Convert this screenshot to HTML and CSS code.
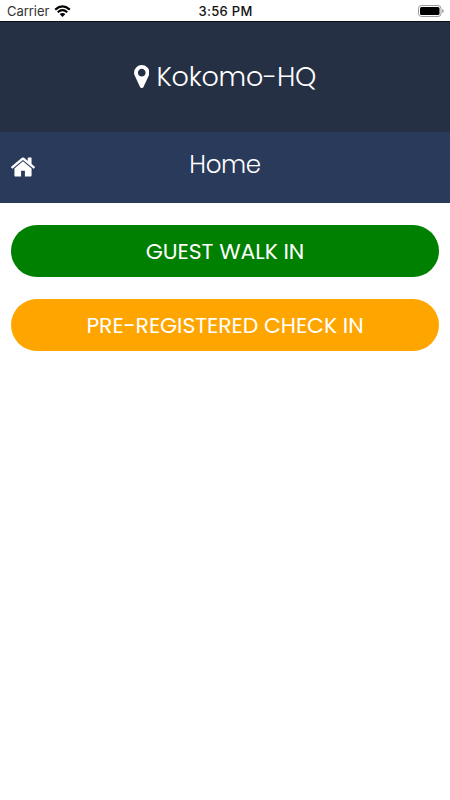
FILE: index.html
```html
<!DOCTYPE html>
<html lang="en">
<head>
    <meta charset="UTF-8">
    <meta name="viewport" content="width=device-width, initial-scale=1">
    <title>Kokomo-HQ</title>
    <link rel="stylesheet" href="styles.css">
</head>
<body>
    <div class="status-bar">
        <div class="carrier">
            <span class="carrier-name">Carrier</span>
            <svg class="wifi" viewBox="0 0 17 12">
                <path d="M1.2 4.6Q8.5-1.7 15.8 4.6M3.7 7.2Q8.5 3.1 13.3 7.2" fill="none" stroke="#000" stroke-width="2.1"/>
                <path d="M5.6 9.1Q8.5 6.9 11.4 9.1L8.5 12z"/>
            </svg>
        </div>
        <span class="time">3:56 PM</span>
        <div class="power">
            <svg class="battery" viewBox="0 0 26 12">
                <rect x=".5" y=".5" width="22.5" height="11" rx="3" fill="none" stroke="#999"/>
                <rect x="2" y="2" width="19.5" height="8" rx="1.5"/>
                <path d="M24.3 4v4q1.4-.6 1.4-2t-1.4-2z" fill="#888"/>
            </svg>
        </div>
    </div>
    <header class="location">
        <svg class="marker" viewBox="384 128 1024 1536">
            <path d="M1152 640q0-106-75-181t-181-75-181 75-75 181 75 181 181 75 181-75 75-181zm256 0q0 109-33 179l-364 774q-16 33-47.5 52t-67.5 19-67.5-19-46.5-52l-365-774q-33-70-33-179 0-212 150-362t362-150 362 150 150 362z"/>
        </svg>
        <span class="location-name">Kokomo-HQ</span>
    </header>
    <nav class="title-bar">
        <a class="home-link" href="#">
            <svg class="home-icon" viewBox="89 250 1614 1286">
                <path d="M1472 992v480q0 26-19 45t-45 19h-384v-384h-256v384h-384q-26 0-45-19t-19-45v-480q0-1 .5-3t.5-3l575-474 575 474q1 2 1 6zm223-69l-62 74q-8 9-21 11h-3q-13 0-21-7l-692-577-692 577q-12 8-24 7-13-2-21-11l-62-74q-8-10-7-23.5t11-21.5l719-599q32-26 76-26t76 26l244 204v-195q0-14 9-23t23-9h192q14 0 23 9t9 23v408l219 182q10 8 11 21.5t-7 23.5z"/>
            </svg>
        </a>
        <h1 class="page-title">Home</h1>
    </nav>
    <main class="actions">
        <button class="btn walk-in">GUEST WALK IN</button>
        <button class="btn check-in">PRE-REGISTERED CHECK IN</button>
    </main>
</body>
</html>
```
FILE: styles.css
```css
* {
    box-sizing: border-box;
}
body {
    margin: 0;
    background: #fff;
    font-family: Poppins, Inter, sans-serif;
}
svg {
    display: block;
}
.status-bar {
    display: grid;
    grid-template-columns: 1fr auto 1fr;
    align-items: center;
    height: 22px;
    padding: 0 6px 0 7px;
    border-bottom: 1px solid #0b0d12;
    font-family: Inter, sans-serif;
    font-size: 13px;
    line-height: 21px;
    color: #111;
}
.carrier {
    display: flex;
    align-items: center;
    gap: 5px;
}
.carrier-name {
    padding-top: 1px;
    color: #333;
    letter-spacing: -0.05px;
}
.wifi {
    width: 17px;
    height: 12px;
}
.time {
    padding-top: 1px;
    font-weight: 500;
    letter-spacing: 0.3px;
}
.power {
    display: flex;
    justify-content: flex-end;
}
.battery {
    width: 26px;
    height: 12px;
}
.location {
    display: flex;
    align-items: center;
    justify-content: center;
    gap: 7px;
    height: 110px;
    background: #253044;
    color: #fff;
}
.marker {
    width: 15.5px;
    height: 23px;
    margin-bottom: 1px;
    fill: #fff;
}
.location-name {
    font-size: 27px;
    font-weight: 300;
    letter-spacing: -0.2px;
}
.title-bar {
    display: grid;
    grid-template-columns: 1fr auto 1fr;
    align-items: center;
    height: 71px;
    padding: 0 11px;
    background: #2a3a5b;
    color: #fff;
}
.home-icon {
    width: 24px;
    height: 20px;
    margin-bottom: 1px;
    fill: #fff;
}
.page-title {
    margin: 0 0 6px;
    font-size: 24.6px;
    font-weight: 300;
    letter-spacing: -0.4px;
}
.actions {
    display: flex;
    flex-direction: column;
    gap: 22px;
    padding: 22px 11px;
}
.btn {
    height: 52px;
    padding: 0;
    border: none;
    border-radius: 26px;
    color: #fff;
    font-family: inherit;
    font-size: 22px;
    letter-spacing: -0.1px;
    cursor: pointer;
}
.walk-in {
    background: #008000;
}
.check-in {
    background: #ffa500;
}
```
